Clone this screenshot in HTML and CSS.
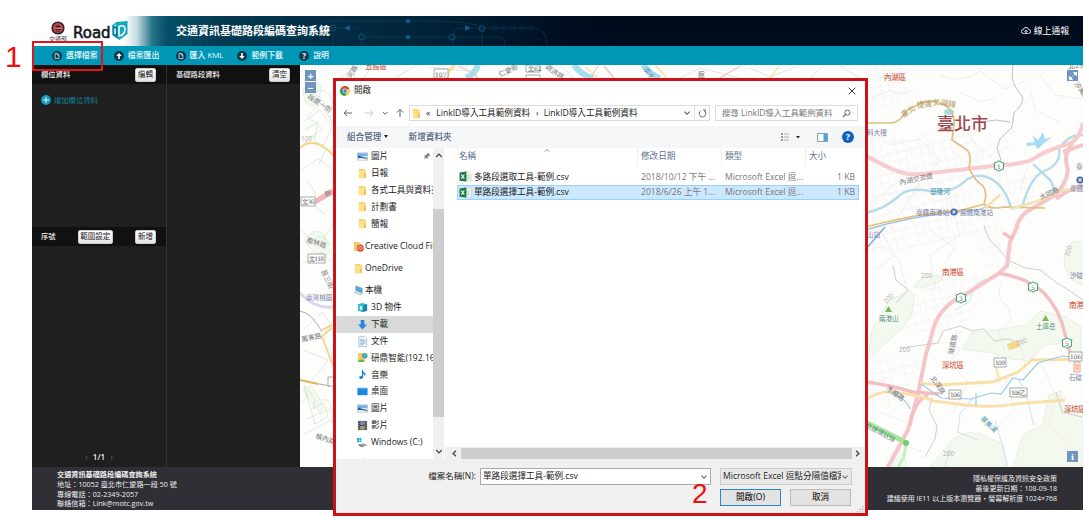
FILE: index.html
```html
<!DOCTYPE html>
<html lang="zh-TW">
<head>
<meta charset="utf-8">
<title>交通資訊基礎路段編碼查詢系統</title>
<link rel="stylesheet" href="styles.css">
</head>
<body>
<svg class="defs" width="0" height="0" aria-hidden="true">
  <defs>
    <symbol id="folder" viewBox="0 0 10 12"><path d="M1 1h5l1 1h1.500v9H1z" fill="#f6cf6b"/><path d="M1 3h6v8.500H1z" fill="#ffe08c"/><path d="M7 6h1.500v5H7z" fill="#e9b94c"/></symbol>
    <symbol id="picture" viewBox="0 0 12 12"><path d="M.5 2h11v8H.5z" fill="#e8f1f8" stroke="#8fa9bd" stroke-width=".6"/><path d="M1 2.500h10v3H1z" fill="#6db2e6"/><path d="M1 5l4 1 6 1.500v2H1z" fill="#2f5f93"/><path d="M1 7.500h5l5 1.200v1H1z" fill="#dfe9ef"/></symbol>
    <symbol id="doc" viewBox="0 0 12 12"><path d="M2 .5h6l2.500 2.500v8.500H2z" fill="#f4f8fb" stroke="#94a9b8" stroke-width=".7"/><path d="M3.500 3.500h4M3.500 5h5.500M3.500 6.500h5.500M3.500 8h5.500M3.500 9.500h4" stroke="#5ba0d0" stroke-width=".7"/></symbol>
    <symbol id="excel" viewBox="0 0 14 12"><path d="M6 1h5l2 2v8H6z" fill="#fff" stroke="#b9c4bc" stroke-width=".7"/><path d="M8 4.500h3.500M8 6.500h3.500M8 8.500h3.500" stroke="#7fb895" stroke-width=".8"/><path d="M.5 1.500L8 .5v11l-7.500-1z" fill="#1c7a43"/><path d="M2.500 3.800l3.200 4.500M5.700 3.800L2.500 8.300" stroke="#fff" stroke-width="1.200"/></symbol>
    <symbol id="file" viewBox="0 0 10 10"><circle cx="5" cy="5" r="5" fill="#0c3a4c"/><path d="M3.100 2.400h2.400l1.400 1.500v3.700H3.100zM5.400 2.400v1.600h1.500" fill="none" stroke="#d7f2f7" stroke-width=".8"/></symbol>
    <symbol id="up" viewBox="0 0 10 10"><circle cx="5" cy="5" r="5" fill="#0c3a4c"/><path d="M5 2L2.300 5h1.900v3h1.600V5h1.900z" fill="#fff"/></symbol>
    <symbol id="down" viewBox="0 0 10 10"><circle cx="5" cy="5" r="5" fill="#0c3a4c"/><path d="M5 8L2.300 5h1.900V2h1.600v3h1.900z" fill="#fff"/></symbol>
    <symbol id="chev" viewBox="0 0 8 8"><path d="M1.500 2.700L4 5.300l2.500-2.600" fill="none" stroke="currentColor" stroke-width="1.100"/></symbol>
  </defs>
</svg>

<div class="app">
  <header class="header">
    <svg class="circuit" viewBox="145 16 450 30" width="450" height="30" fill="none" stroke="#0c4a6e" stroke-width=".7">
      <path d="M160 27H333M170 37h145l7-16h80q80-1 80 8M333 46V22M345 28h9q8 1 8 10v8M333 28h12M362 37h90M453 46v-9q0-9 9-9h20M482 28h50q15 0 15 18M452 37h48q5 0 5 9M482 28v18M235 30h75M200 37v9M253 18v12M290 24v13" opacity=".7"/>
      <path d="M493 26h4v4h-4zM502 26h4v4h-4zM511 26h4v4h-4zM520 26h4v4h-4zM529 26h4v4h-4z" opacity=".45"/>
      <g stroke-width="1.100"><circle cx="333" cy="28" r="2.800"/><circle cx="362" cy="37" r="2.800"/><circle cx="452" cy="37" r="2.800"/><circle cx="482" cy="28.500" r="2.800"/></g>
      <g fill="#12598a" stroke="none"><path d="M350 25v6l-6-3zM465 25v6l6-3z"/><circle cx="408" cy="21" r="2.200"/><circle cx="408" cy="37" r="2.200"/></g>
    </svg>
    <div class="emblem">
      <svg viewBox="0 0 14 14" width="14" height="14"><circle cx="7" cy="7" r="6.600" fill="#26264b"/><circle cx="7" cy="7" r="4.900" fill="#d6452e"/><path d="M3.500 6.500Q7 2 10.500 6.500zM4 8h6v1H4zM5 9.800h4v.8H5z" fill="#2a2146"/><path d="M3.200 7.200h7.600" stroke="#f3c9a7" stroke-width=".6"/></svg>
      <span>交通部</span>
    </div>
    <div class="logo"><span>Road</span>
      <svg viewBox="0 0 17 21" width="18" height="21"><path d="M1 5l4-3 11-1v13l-8 6-7-5z" fill="#16a6bf"/><path d="M1 5l5 2.500v11L1 15z" fill="#0b7f9a"/><path d="M3.500 8.500v5.500M7.500 6.500v9.500c3.500-.5 6-3 6-7 0-3-2.500-4-6-2.500z" fill="none" stroke="#fff" stroke-width="1.500"/><path d="M3 5.800l1.500-.8" stroke="#fff" stroke-width="1.300"/></svg>
    </div>
    <h1>交通資訊基礎路段編碼查詢系統</h1>
    <a class="report"><svg viewBox="0 0 12 10" width="10" height="9"><path d="M3.500 8.500H3a2.300 2.300 0 0 1-.3-4.600 3.400 3.400 0 0 1 6.600 0A2.300 2.300 0 0 1 9 8.500h-.5M6 9V5M4.300 6.500L6 4.700l1.700 1.800M4 8.500h4" fill="none" stroke="#fff" stroke-width="1.100"/></svg>線上通報</a>
  </header>

  <nav class="nav">
    <a><svg><use href="#file"/></svg>選擇檔案</a>
    <a><svg><use href="#up"/></svg>檔案匯出</a>
    <a class="kml"><svg><use href="#file"/></svg>匯入 KML</a>
    <a><svg><use href="#down"/></svg>範例下載</a>
    <a><i class="q">?</i>說明</a>
  </nav>

  <main class="main">
    <section class="col">
      <div class="bar"><b>欄位資料</b><button>編輯</button></div>
      <div class="upper"><a class="add"><svg viewBox="0 0 10 10" width="10" height="10"><circle cx="5" cy="5" r="5" fill="#0e9cb9"/><path d="M5 1.800v6.400M1.800 5h6.400" stroke="#e4f8fb" stroke-width="1"/></svg>增加欄位資料</a></div>
      <div class="bar"><b>序號</b><button class="range">範圍設定</button><button>新增</button></div>
      <div class="lower"><span class="pager"><i>‹</i> 1/1 <i>›</i></span></div>
    </section>
    <section class="col second">
      <div class="bar"><b>基礎路段資料</b><button>清空</button></div>
    </section>
    <section class="map">
      <svg viewBox="300 65 783 402" width="783" height="402" fill="none" class="mapart">
        <defs>
          <pattern id="blocks" width="23" height="19" patternUnits="userSpaceOnUse" patternTransform="rotate(-14)"><path d="M0 4h23M0 12h14M6 0v19M14 4v15M19 0v12" stroke="#ececee" stroke-width=".6"/></pattern>
          <g id="shield"><path d="M0-5.200L2-3.900 4.900-3 4.300 0 4.600 3.200 1.800 4 0 5.200-1.800 4-4.600 3.200-4.300 0-4.900-3-2-3.900z" fill="#fff" stroke="#3c9a68" stroke-width="1"/></g>
          <g id="station"><circle r="3.600" fill="#4b6bb0"/><path d="M-2 0h4M0-2v4M-1.500-1.500l3 3M1.500-1.500l-3 3" stroke="#fff" stroke-width=".6"/></g>
        </defs>
        <path d="M300 65h783v402H300z" fill="#fdfdfc"/>
        <path d="M865 130l50 10 35-25 50 50-25 30 20 35-60 15-70 10zM865 65h40l10 30-50 20zM990 170l60 5-30 40-30-20zM900 330l30-60 60 5-30 60zM970 225h40l-20 50zM865 350l60 10-20 45-40 5z" fill="url(#blocks)"/>
        <g fill="#f4f9f0" stroke="#deebd9" stroke-width=".7">
          <path d="M913 286q10-12 28-10l2 3q-12 9-28 9z"/>
          <path d="M868 360l4-30 10-18 8-12 20-10 5 5-4 22-10 12-14 13z"/>
          <path d="M1064 262q2-20 12-21l8 2v42q-18-3-20-23z"/>
          <path d="M1025 325l16-14 25 6 15 10v30l-15-14-22 2-14 16-18-2-20-6-30-4 10-16 30-4z"/>
          <path d="M945 448q14-20 35-14l23 10 3 23H930zM1013 467l10-32 20-10 6-30 12-4 2 20 20-6v62zM885 467l15-18 8 18z"/>
          <path d="M303 90q10-14 19-4l-4 18q-14 8-15-14zM304 240q10-14 20-6l6 18-10 8zM303 390l8-5q15 20 10 30z"/>
        </g>
        <g stroke="#ebe7e4" stroke-width=".7">
          <path d="M880 78l12-8M866 100l23-9 18 3M890 145l30-6 20 22-15 15M940 75q20 10 40-4l25 18 20-8M960 92l20 10 15-4M985 120l-15 18 20 18 20-10M1040 75l15 20 26 4M1030 90l5 20 25 12M1030 160l-10 30M900 180l-30 24M925 175l-35 55M950 200l10 35-30 20 6 35M865 250l20-4 14 14 8 30M880 230l15 25-20 15M930 230l25 18-10 15M1002 280q-8 20 6 27l3 14-12 10 6 20M925 350q20-15 35 0l-10 12 18 20-15 30M880 412l30 12-8 20 20 8M995 430l20-20-10-30 20-14-6-28M1040 360l16 36-8 30 20 15"/>
        </g>
        <g stroke="#e3deda" stroke-width=".7" id="contours">
          <path d="M303 92l16 13-12 11 15 13-18 14M309 98q16-18 24 5M302 123l18-13 12 16-8 19-22-3M300 171l18-12 14 10M300 230l20 15 12-20M301 265l20-13 12 11M303 330l19-18 10 14M303 350l25 10-16 20M302 388q10 8 0 14M306 419l25-10M303 435l28-15M320 400q14-4 12 22"/>
        </g>
        <g stroke="#c8e7c4" stroke-width=".8"><path d="M305 130l13-8-4 18 12 9-7 15M307 180l9 14-4 9 13 12M316 95q11 6 7 12l9 15M307 246q15-19 23 0M304 385l11 14-2 10 10-6 5 13-13 8z"/></g>
        <path d="M300 148q14-13 33 7M322 330l10-5M333 365q-10-25-11-29l10-8" stroke="#f6d68d" stroke-width="2"/>
        <path d="M313 203l20-12" stroke="#f4b3b7" stroke-width="5"/>
        <path d="M300 311q12 2 22 21M300 380q18 4 30 6" stroke="#a8a2a3" stroke-width=".9"/><path d="M300 380l18 4" stroke="#e7b453" stroke-width="2"/>
        <path d="M300 293q14 16 33 14" stroke="#dad7ee" stroke-width="3"/>
        <g><path d="M340 78l18-12M372 65l-8 13M395 78l20-12M430 67l40 4M560 65l14 13M680 78l20-10 40 10M750 68l20 9 30-12M810 78l14-13M840 66l20 12" stroke="#dfdbdc" stroke-width=".8"/>
          <path d="M455 65q-9 7-8 13" stroke="#f9dfa8" stroke-width="4"/><path d="M478 78q-5-6-20-12M590 78l8-12M604 66l10 12M720 78l20-12" stroke="#f6bdb8" stroke-width="1.200"/>
          <path d="M466 78q9-4 12-13M574 65q7 10 19 13M643 65q8 10 17 13" stroke="#a9dcec" stroke-width="6"/><path d="M585 67l12 10M655 65l12 13M770 78l9-12" stroke="#fbe6b3" stroke-width="2"/></g>
        <g stroke="#c3e2f1" stroke-width=".9"><path d="M955 310l14-8 6-17 10-6M978 440l-20-8 2-18 14-17M995 420l10 35 3 12M1019 380l8 18 7 28M945 467l5-20"/></g>
        <path d="M865 213q20-4 34-17 9-9 31-5 25 2 36-11 16-10 31 3 10 9 14 25M1022 207q8-28 20-35 20-7 17-24 10-14 24-13M1033 164l18 17 6 17" stroke="#b5dcea" stroke-width="2.400"/>
        <path d="M1026 143l9-1-3-7 6 5 5-8 2 7 7-2-9 7-5 5-3-4-8 1z" fill="#a6dcef"/><ellipse cx="949" cy="112" rx="5" ry="3" fill="#9bdfe9"/>
        <path d="M865 230q45-14 100-19 15 0 20-4" stroke="#9cc3ea" stroke-width="1.500"/><path d="M865 227q50-13 97-17l23-6" stroke="#ecbf68" stroke-width="1.500"/>
        <path d="M865 250q14-16 20-23" stroke="#7eb2e6" stroke-width="1.600"/>
        <path d="M1013 65q-2 15 2 21l8 12q-1 8-9 15l-2 14-12 12-3 9 4 12-8 7M980 122l16-2 14 2" stroke="#cdb2b5" stroke-width=".9"/>
        <path d="M984 225q3 15 12 21l12 14 17 8 15 2 17 13 13 8 13 9M893 265l3 15 12 10-12 13M900 348l38-5 5-12 17-5 12 5 12-2 10 12 14-2 10 4M932 397l-3 13 8 16-2 13-10 18M1056 392l6 20 20 5" stroke="#c9bfbe" stroke-width=".8"/>
        <path d="M865 155q27 16 43 19 12 1 23-1l71-8q26-1 36-9 10-6 33-13 9-5 12-20" stroke="#f8cccf" stroke-width="4"/>
        <path d="M1072 143l-4 7q-4 8 0 20-2 15-13 25l-27 16q-7 4-12 16M1083 185q-16 5-27 14M1083 145l-20 7M1018 225l-8 17-3 24-9 8-32 20q-29 13-34 40l-6 20-8 40-10 36-20 37" stroke="#f6c5c9" stroke-width="4"/>
        <path d="M998 273q30 5 46 20 16 17 21 41l6 22M865 382q20 2 48 10l26 2M928 395q-14 6-18 30M1003 233l10 6" stroke="#f3bfc3" stroke-width="3.400"/>
        <path d="M865 123h26q10-1 15-12l15-8q12-4 24 2 10 6 9 19l-2 16 15 10q5 5 2 18 5 12 14 18 5 7 1 18 7 6 20 3l41 1" stroke="#e3be82" stroke-width="1.700"/>
        <path d="M1010 209l28-8 22-10 20-4M1000 195l-15 13" stroke="#f2e1b2" stroke-width="2.600"/>
        <path d="M865 400q18-12 35-7 20 2 33 8l32 4q30 3 50-1l50-4M920 383q15 3 35 1l38-2 25-10 14-12 50-1" stroke="#fadfa8" stroke-width="2.800"/>
        <path d="M1000 382l-4-14 6-8" stroke="#fae3b4" stroke-width="2.400"/><path d="M1008 345l9-4 2 5-9 3z" fill="#f8d78f" stroke="#f8d78f" stroke-width="2"/>
        <path d="M921 384l20 14 30 1 20-6 10 1 12-16 10 2 15-17 24-7 20 2M886 392q20 5 24 17M976 393v13" stroke="#9bcbe6" stroke-width="1.200"/>
        <path d="M865 422l40 20" stroke="#a5e39b" stroke-width="5"/><path d="M906 443l-2 14-6 10" stroke="#c9eec4" stroke-width="3"/>
        <circle cx="906" cy="443" r="3" fill="#71cc69"/>
        <g fill="#7eb856"><path d="M885 312l3.500-6 3.500 6zM1042 321l3.500-6 3.500 6z"/></g>
        <g transform="translate(1077 367)"><path d="M-3-5h6V5h-6z" fill="#fff1ec" stroke="#eb9374" stroke-width=".8"/><path d="M-1-3v6M1-3v6" stroke="#eb9374"/></g>
        <use href="#shield" x="999" y="166"/><use href="#shield" x="961" y="298"/><use href="#shield" x="1033" y="287"/><use href="#shield" x="1067" y="343"/>
        <use href="#station" x="954" y="212"/><use href="#station" x="1080" y="180"/>
        <g fill="#fff" stroke="#8f9790" stroke-width=".8"><path d="M434 69h14v9h-14zM526 65h14v7h-14zM526 75h14v4h-14zM301 197h14v9h-14zM308 254h17v9h-17zM994 358h12v9h-12zM949 390h12v9h-12zM1010 388h17v9h-17zM1069 352h13v9h-13zM328 377h6v9h-6z"/></g>
        <g class="num"><text x="435" y="76.500">107</text><text x="528" y="71">北62</text><text x="302" y="204" textLength="12">北76</text><text x="309" y="261" textLength="15">北118</text><text x="995" y="365" textLength="10">109</text><text x="950" y="397" textLength="10">106</text><text x="1011" y="395" textLength="15">106乙</text><text x="1070" y="359" textLength="11">106</text><text x="997" y="169">1</text><text x="959" y="301">3</text><text x="1031" y="290">5</text><text x="1065" y="346">5</text></g>
        <g class="red"><text x="884" y="80" textLength="22">內湖區</text><text x="942" y="275" textLength="22">南港區</text><text x="942" y="368" textLength="22">深坑區</text><text x="1069" y="308" textLength="22">南港區</text><text x="1064" y="412" textLength="22">深坑區</text><text x="365" y="69" textLength="22">五股區</text></g>
        <text class="city" x="937" y="130" textLength="51">臺北市</text>
        <g class="road"><text transform="translate(900 185) rotate(-12)">內湖交流道</text><text transform="translate(1041 200) rotate(-25)">大同路</text><text transform="translate(307 98) rotate(33)">段原一街</text><text transform="translate(306 242) rotate(18)">南林路</text><text transform="translate(321 271) rotate(65)">莒三街</text><text transform="translate(302 342) rotate(-12)">萬客路</text><text transform="translate(315 438) rotate(18)">橫內路</text><text transform="translate(886 389) rotate(38)">木柵路</text><text transform="translate(930 378) rotate(55)">北深路</text><text transform="translate(953 355) rotate(-78)">隧道路</text><text transform="translate(351 79) rotate(-60)">河路</text><text transform="translate(500 77) rotate(-25)">仁愛街</text><text transform="translate(545 68) rotate(35)">疏洪路</text><text transform="translate(1074 84) rotate(55)">汐萬路</text><text x="698" y="77">館</text><text transform="translate(326 197) rotate(-25)">新</text></g>
        <g class="metro"><text transform="translate(903 118) rotate(-33)">臺北</text><text transform="translate(917 108) rotate(-8)">捷運文</text><text transform="translate(940 105) rotate(10)">湖線</text></g>
        <g class="water"><text x="930" y="194" textLength="20">基隆河</text><text transform="translate(980 419) rotate(45)">景美溪</text><text transform="translate(643 69) rotate(55)">淡水河</text></g>
        <g class="place"><text x="916" y="215" textLength="33">臺鐵南港站</text><text x="960" y="215" textLength="33">高鐵南港站</text><text x="867" y="135">科大樓</text><text x="867" y="237">山站</text><text x="1070" y="191">臺鐵</text><text x="1076" y="169">臺</text><text x="1070" y="278">汐碇</text><text x="1069" y="380">石碇</text><text x="306" y="300">臺灣桃園</text></g>
        <g class="peak"><text x="879" y="321">南港山</text><text x="1036" y="329">土庫岳</text><text transform="translate(865 427) rotate(28)">北捷環狀線</text></g>
        <g class="elev"><text x="921" y="278">200</text><text transform="translate(886 304) rotate(-45)">200</text><text x="943" y="456">200</text><text x="899" y="352">200</text><text transform="translate(1069 257) rotate(-75)">200</text><text x="301" y="141">100</text><text transform="translate(1017 346) rotate(-20)">200</text></g>
        <text class="cut" x="1068" y="68">北29</text>
      </svg>
      <div class="zoomers"><button>+</button><button>−</button></div>
      <button class="full"><svg viewBox="0 0 10 10" width="10" height="10"><path d="M5.500 1.500h3v3zM1.500 5.500v3h3zM7.500 2.500l-2 2M2.500 7.500l2-2" fill="#fff" stroke="#fff"/></svg></button>
      <button class="info">i</button>
    </section>
  </main>

  <footer class="footer">
    <div><b>交通資訊基礎路段編碼查詢系統</b><span>地址：10052 臺北市仁愛路一段 50 號</span><span>專線電話：02-2349-2057</span><span>聯絡信箱：Link@motc.gov.tw</span></div>
    <div class="right"><span>隱私權保護及資訊安全政策</span><span>最後更新日期：108-09-18</span><span>建議使用 IE11 以上版本瀏覽器・螢幕解析度 1024×768</span></div>
  </footer>
</div>

<div class="dialog">
  <div class="title">
    <svg viewBox="0 0 10 10" width="10" height="10"><circle cx="5" cy="5" r="5" fill="#ffcd40"/><path d="M5 5L.7 2.500A5 5 0 0 1 9.300 2.500z" fill="#e04335"/><path d="M5 5L.7 2.500A5 5 0 0 0 5 10l2-4z" fill="#1fa15d"/><circle cx="5" cy="5" r="2.400" fill="#fff"/><circle cx="5" cy="5" r="1.900" fill="#4688f1"/></svg>
    <span>開啟</span>
    <svg class="close" viewBox="0 0 8 8" width="8" height="8"><path d="M.7.7l6.600 6.600M7.300.7L.7 7.300" stroke="#222" stroke-width=".9"/></svg>
  </div>
  <div class="address">
    <svg class="arrows" viewBox="0 0 66 12" width="66" height="12" fill="none" stroke="#666" stroke-width="1"><path d="M10 6H2M5 3L2 6l3 3"/><path d="M23 6h8M28 3l3 3-3 3" stroke="#ccc"/><path d="M41 5l2.200 2.300L45.400 5"/><path d="M58 10V2.500M55 5.500l3-3 3 3"/></svg>
    <div class="path"><svg class="fi"><use href="#folder"/></svg><i>«</i><span>LinkID導入工具範例資料</span><i class="gt">›</i><span>LinkID導入工具範例資料</span><svg class="cv"><use href="#chev"/></svg><em><svg viewBox="0 0 10 10" width="9" height="9"><path d="M3 2A3.700 3.700 0 1 0 7 2M5.500 1H8v2.600" fill="none" stroke="#555" stroke-width="1"/></svg></em></div>
    <div class="search"><span>搜尋 LinkID導入工具範例資料</span><svg viewBox="0 0 10 10" width="9" height="9"><circle cx="6" cy="4" r="2.800" fill="none" stroke="#555"/><path d="M4 6L1 9" stroke="#555" stroke-width="1.200"/></svg></div>
  </div>
  <div class="tools"><span>組合管理 <i></i></span><span>新增資料夾</span>
    <div class="views">
      <svg viewBox="0 0 20 10" width="24" height="10"><path d="M0 1h2v2H0zM0 4h2v2H0zM0 7h2v2H0z" fill="#999"/><path d="M3 2h5M3 5h5M3 8h5" stroke="#aaa"/><path d="M15 4h4l-2 2.500z" fill="#222"/></svg>
      <svg viewBox="0 0 11 9" width="11" height="9"><path d="M.5.5h10v8H.5z" fill="#fff" stroke="#8ba0b0"/><path d="M6.500 1h3.700v7H6.500z" fill="#4aa5df"/></svg>
      <b>?</b>
    </div>
  </div>
  <div class="panes">
    <div class="tree">
      <div class="item"><svg><use href="#picture"/></svg>圖片<svg class="pin" viewBox="0 0 8 8"><path d="M4.500 1l2.500 2.500M5 1.500L3 3.500l-1.500.5 2.500 2.500.5-1.500 2-2zM2.700 5.300L1 7" fill="#888" stroke="#777" stroke-width=".8"/></svg></div>
      <div class="item"><svg><use href="#folder"/></svg>日報</div>
      <div class="item"><svg><use href="#folder"/></svg>各式工具與資料夾</div>
      <div class="item"><svg><use href="#folder"/></svg>計劃書</div>
      <div class="item"><svg><use href="#folder"/></svg>簡報</div>
      <div class="item root"><svg viewBox="0 0 12 12"><path d="M1 1h6l1 2h2v8H1z" fill="#f4c866"/><circle cx="8" cy="8" r="3.800" fill="#dc4a38"/><path d="M6 9a1.500 1.500 0 0 1 1-2.500 1.800 1.800 0 0 1 3 1.500Q9 10 7 9" fill="none" stroke="#fff" stroke-width=".8"/></svg>Creative Cloud Files</div>
      <div class="item root"><svg><use href="#folder"/></svg>OneDrive</div>
      <div class="item root"><svg viewBox="0 0 12 12"><path d="M3 1l7 2.500v5L3 6z" fill="#4da9e4" stroke="#6e8ba3" stroke-width=".6"/><path d="M1 8l3-1 7 2.500-3 1.500z" fill="#dce5eb" stroke="#a3b2bd" stroke-width=".6"/></svg>本機</div>
      <div class="item"><svg viewBox="0 0 12 12"><path d="M1 2.500L6 1l5 1.500v7L6 11 1 9.500z" fill="#35b9d8"/><path d="M6 4l5-1.500v7L6 11z" fill="#1689a8"/><path d="M3 4.500h3v4H3z" fill="#d9f7fb"/></svg>3D 物件</div>
      <div class="item selected"><svg viewBox="0 0 12 12"><path d="M4 1h4v5h3l-5 5.500L1 6h3z" fill="#2b86dc"/></svg>下載</div>
      <div class="item"><svg><use href="#doc"/></svg>文件</div>
      <div class="item"><svg viewBox="0 0 12 12"><path d="M1 1h5l1 1h2v8H1z" fill="#f5cd68"/><circle cx="8.500" cy="4" r="3" fill="#3c9cd2"/><path d="M7 3q2-2 3 0l-2 3z" fill="#6fc06d"/><path d="M1 10h7M5 8v3" stroke="#3ba64b" stroke-width="1.300"/></svg>研鼎智能(192.168</div>
      <div class="item"><svg viewBox="0 0 12 12"><path d="M6 1v8" stroke="#1584d6" stroke-width="1.300"/><path d="M6 1q0 2 3 3.500 1 1.500-1 3 .5-2-2-2.500z" fill="#1584d6"/><ellipse cx="4.500" cy="9.300" rx="2" ry="1.600" fill="#1584d6"/></svg>音樂</div>
      <div class="item"><svg viewBox="0 0 12 12"><path d="M.5 2h11v8H.5z" fill="#1688e0"/><path d="M1 2.500h10v1H1z" fill="#54b4f3"/></svg>桌面</div>
      <div class="item"><svg><use href="#picture"/></svg>圖片</div>
      <div class="item"><svg viewBox="0 0 12 12"><path d="M1 1h10v10H1z" fill="#45464d"/><path d="M3.500 1.500h5v4h-5z" fill="#708fba"/><path d="M3.500 6.500h5v4h-5z" fill="#a4a06e"/><path d="M2 1.500v10M10 1.500v10" stroke="#ddd" stroke-width=".8" stroke-dasharray="1 1"/></svg>影片</div>
      <div class="item"><svg viewBox="0 0 12 12"><path d="M0 1h2.200v2.200H0zM2.600 1h2.200v2.200H2.600zM0 3.600h2.200v2.200H0zM2.600 3.600h2.200v2.200H2.600z" fill="#19b3d7"/><path d="M2 8l6-1 3.500 2-5 2z" fill="#9aa5ae"/><path d="M2 8l4.500 2v1.200L2 9.500z" fill="#5d666e"/></svg>Windows (C:)</div>
      <div class="item"><svg viewBox="0 0 12 12"><path d="M2 8l5-2 4 2-5 2z" fill="#8c979f"/></svg></div>
    </div>
    <div class="vscroll"><svg class="flip"><use href="#chev"/></svg><i></i><svg><use href="#chev"/></svg></div>
    <div class="list">
      <div class="row head"><span>名稱<svg class="flip"><use href="#chev"/></svg></span><span>修改日期</span><span>類型</span><span>大小</span></div>
      <div class="row"><span><svg><use href="#excel"/></svg>多路段選取工具-範例.csv</span><span>2018/10/12 下午 ...</span><span>Microsoft Excel 逗...</span><span>1 KB</span></div>
      <div class="row picked"><span><svg><use href="#excel"/></svg>單路段選擇工具-範例.csv</span><span>2018/6/26 上午 1...</span><span>Microsoft Excel 逗...</span><span>1 KB</span></div>
      <div class="hscroll"><svg class="l"><use href="#chev"/></svg><i></i><svg class="r"><use href="#chev"/></svg></div>
    </div>
  </div>
  <div class="bottom">
    <label>檔案名稱(N):</label>
    <div class="field name"><span>單路段選擇工具-範例.csv</span><svg><use href="#chev"/></svg></div>
    <div class="field type"><span>Microsoft Excel 逗點分隔值檔案</span><svg><use href="#chev"/></svg></div>
    <button class="ok">開啟(O)</button><button class="cancel">取消</button>
    <svg class="grip" viewBox="0 0 9 9" width="8" height="8"><path d="M7 1h1.500v1.500H7zM7 4h1.500v1.500H7zM7 7h1.500v1.500H7zM4 4h1.500v1.500H4zM4 7h1.500v1.500H4zM1 7h1.500v1.500H1z" fill="#b5b5b5"/></svg>
  </div>
</div>

<div class="frame"></div>
<span class="step one">1</span>
<span class="step two">2</span>
</body>
</html>
```
FILE: styles.css
```css
* { box-sizing: border-box; }
body { margin: 0; width: 1089px; height: 520px; overflow: hidden; position: relative; background: #fff; font-family: "Open Sans", "Noto Sans CJK TC", sans-serif; font-size: 8px; line-height: 1.2; }
.defs { position: absolute; }
i, em { font-style: normal; }
svg { flex: none; display: block; }
button { font: inherit; padding: 0; margin: 0; }

.app { margin: 16px 0 0 32px; width: 1051px; height: 494px; display: flex; flex-direction: column; position: absolute; top: 0; left: 0; }

.header { height: 30px; flex: none; position: relative; display: flex; align-items: center; color: #fff; background: linear-gradient(90deg, #fff 0, #fff 92px, #c4dbe1 105px, #287489 120px, #06506a 134px, #033b51 185px, #022c42 300px, #022439 390px, #010e21 530px, #000b1b 600px); }
.circuit { position: absolute; left: 113px; top: 0; }
.emblem { width: 41px; padding-left: 11px; height: 30px; display: flex; flex-direction: column; align-items: center; color: #444; font-size: 6px; line-height: 6px; padding-top: 5px; }
.emblem span { margin-top: 1px; white-space: nowrap; }
.logo { width: 103px; display: flex; align-items: center; color: #17181a; font: 15px "DejaVu Sans", sans-serif; letter-spacing: 0; -webkit-text-stroke: .6px #17181a; }
.logo span { padding-top: 4px; }
.logo svg { margin: -1px 0 0 0; }
h1 { margin: 0; font-size: 11px; line-height: 16px; position: relative; font-weight: 700; white-space: nowrap; }
.report { margin-left: auto; margin-right: 14px; display: flex; align-items: center; gap: 3px; font-size: 8.800px; }

.nav { height: 19px; flex: none; background: #0097b6; display: flex; align-items: center; color: #e9fbfd; font-size: 7.900px; padding-left: 20px; }
.nav a { width: 61.800px; display: flex; align-items: center; gap: 4px; white-space: nowrap; font-weight: 500; }
.nav svg { width: 10px; height: 10px; }
.q { width: 10px; height: 10px; border-radius: 50%; background: #0c3a4c; color: #fff; font-weight: bold; text-align: center; line-height: 10px; font-size: 8px; }

.main { height: 402px; flex: none; display: grid; grid-template-columns: 134px 134px 783px; background: #1f1f1f; color: #eee; }
.col { display: flex; flex-direction: column; font-size: 7.300px; }
.second { border-left: 1px solid #303030; }
.bar { height: 19px; flex: none; background: #111; display: flex; align-items: center; justify-content: space-between; padding: 0 10px 0 9px; }
.bar b { font-weight: 500; }
.bar button { height: 14px; width: 21px; border: 1px solid #ccc; border-radius: 2px; background: linear-gradient(#fff, #e5e5e5); color: #222; font-size: 7.500px; line-height: 11px; white-space: nowrap; }
.bar .range { width: 35px; }
.upper { height: 143px; padding: 11px 9px; }
.add { color: #157f96; display: flex; gap: 3px; align-items: center; }
.lower { flex: 1; display: flex; align-items: flex-end; justify-content: center; padding-bottom: 5px; }
.pager { font-weight: 600; font-size: 8px; }
.pager i { color: #555; padding: 0 3px; }

.map { position: relative; overflow: hidden; }
.mapart text { font-size: 7px; }
.mapart .num text { font: 6px "DejaVu Serif", "Noto Sans CJK TC", serif; fill: #555; }
.mapart .red text { fill: #d2664f; font-size: 7.500px; font-weight: 500; }
.mapart .city { fill: #9b494c; font-size: 17px; font-weight: 500; }
.mapart .road text { fill: #77777a; font-size: 6.800px; }
.mapart .metro text { fill: #b29963; font-size: 7.800px; }
.mapart .water text { fill: #4a91ab; font-size: 6.800px; }
.mapart .place text { fill: #7680a5; font-size: 6.600px; }
.mapart .peak text { fill: #55917d; font-size: 6.500px; }
.mapart .elev text { fill: #b0b0a8; font-size: 6.500px; }
.mapart .cut { fill: #777; }
.map button { border: 0; background: #7295bf; color: #fff; width: 11px; height: 11px; font-weight: bold; font-size: 10px; line-height: 10px; display: flex; align-items: center; justify-content: center; }
.zoomers { position: absolute; left: 5px; top: 5px; display: grid; gap: 1px; }
.map .full, .map .info { position: absolute; right: 5px; top: 5px; }
.map .info { top: auto; bottom: 5px; font-family: "DejaVu Serif", serif; font-size: 8px; }

.footer { height: 43px; flex: none; background: #302f36; color: #eee; display: flex; justify-content: space-between; padding: 3px 26px 0 25px; font-size: 7.150px; line-height: 9.800px; white-space: nowrap; }
.footer div { display: flex; flex-direction: column; }
.footer .right { align-items: flex-end; padding-top: 4px; font-size: 7px; }

.dialog { position: absolute; left: 333px; top: 78px; width: 535px; height: 438px; border: 3px solid #cc1219; background: #fff; font-size: 8.600px; color: #222; white-space: nowrap; }
.title { height: 19px; display: flex; align-items: center; padding: 0 9px 0 4px; gap: 4px; }
.title .close { margin-left: auto; }
.address { height: 26px; display: flex; align-items: center; padding: 0 7px 0 5px; }
.arrows { width: 68px; }
.path { width: 301px; height: 16px; border: 1px solid #ddd; display: flex; align-items: center; padding-left: 2px; }
.path .fi { width: 9px; height: 11px; }
.path i { padding: 0 6px 0 5px; }
.path .gt { padding: 0 5px 0 6px; }
.path .cv { width: 8px; height: 8px; margin-left: auto; color: #555; }
.path em { margin-left: 3px; border-left: 1px solid #e2e2e2; height: 14px; width: 15px; display: flex; align-items: center; justify-content: center; }
.search { width: 143px; height: 16px; margin-left: 5px; border: 1px solid #ddd; color: #777; display: flex; align-items: center; justify-content: space-between; padding: 0 6px; font-size: 8.400px; }
.tools { height: 22px; background: #f5f6f7; display: flex; align-items: center; padding: 0 11px; color: #27415f; gap: 21px; }
.tools span i { display: inline-block; border: 2.500px solid transparent; border-top: 3px solid #222; border-bottom: 0; vertical-align: 2px; }
.views { margin-left: auto; display: flex; align-items: center; gap: 14px; }
.views b { width: 12px; height: 12px; border-radius: 50%; background: #0b63bd; color: #fff; text-align: center; font-size: 9px; line-height: 12px; }

.panes { height: 311px; display: grid; grid-template-columns: 97px 11px 421px; }
.tree { overflow: hidden; height: 311px; }
.item { height: 16.850px; display: flex; align-items: center; gap: 3px; padding-left: 21px; }
.item svg { width: 11px; height: 11px; }
.item .pin { margin-left: 32px; width: 8px; height: 8px; }
.item.root { padding-left: 17px; gap: 1px; margin-top: 5.400px; }
.selected { background: #d9d9d9; }
.vscroll { background: #f0f0f0; display: flex; flex-direction: column; align-items: center; padding: 3px 0; }
.vscroll svg { width: 10px; height: 9px; color: #444; }
.vscroll i { width: 11px; height: 208px; background: #cdcdcd; margin: 49px 0 auto; }
.flip { transform: rotate(180deg); }
.list { display: flex; flex-direction: column; padding-top: 0; }
.row { display: grid; grid-template-columns: 180px 84px 84px 52px; height: 15.500px; margin-left: 13px; width: 402px; align-items: center; color: #777; }
.row span { padding-left: 4px; }
.row span:first-child { display: flex; align-items: center; gap: 2px; padding-left: 2px; color: #222; }
.row svg { width: 13px; height: 11px; }
.row span:last-child { text-align: right; padding-right: 2px; }
.head { height: 17px; margin-bottom: 4px; color: #5a6f8a; }
.head span { line-height: 17px; border-left: 1px solid #eee; padding-left: 3px; }
.row.head span:first-child { border: 0; color: #5a6f8a; padding-left: 2px; }
.row.head span:last-child { text-align: left; }
.head svg { width: 8px; height: 7px; margin: -13px 0 0 65px; color: #888; }
.picked { background: #cce8ff; outline: 1px solid #99d1ff; outline-offset: -1px; }
.hscroll { margin-top: auto; height: 12px; background: #f0f0f0; display: flex; align-items: center; justify-content: space-between; padding: 0 3px 0 5px; margin-left: 1px; }
.hscroll svg { width: 9px; height: 9px; color: #444; }
.hscroll i { width: 391px; height: 11px; background: #cdcdcd; }
.l { transform: rotate(90deg); }
.r { transform: rotate(-90deg); }

.bottom { position: relative; height: 54px; background: #f0f0f0; display: grid; grid-template-columns: 140px 231px 61px 61px; grid-template-rows: 17px 17px; row-gap: 4px; padding-top: 9px; }
.bottom label { justify-self: end; align-self: center; font-size: 8.500px; }
.field { background: #fff; border: 1px solid #aaa; display: flex; align-items: center; justify-content: space-between; padding: 0 2px; overflow: hidden; }
.field svg { width: 8px; height: 8px; color: #666; }
.name { margin-left: 4px; width: 231px; }
.type { grid-column: 3 / 5; margin-left: 13px; width: 132px; background: #e8e8e8; border-color: #ccc; }
.type span { overflow: hidden; width: 118px; }
.bottom button { background: #e3e3e3; border: 1px solid #bbb; height: 17px; width: 61px; }
.bottom .ok { grid-column: 3; margin-left: 13px; border: 1.500px solid #2a84cf; }
.bottom .cancel { grid-column: 4; margin-left: 22px; }
.grip { position: absolute; right: 1px; bottom: 0; }

.frame { position: absolute; left: 32px; top: 41px; width: 71px; height: 30px; border: 2px solid #e2141b; }
.step { position: absolute; color: #f20d0d; font-family: "Liberation Sans", Arial, sans-serif; line-height: 1; }
.one { left: 5px; top: 42px; font-size: 30px; }
.two { left: 692px; top: 480px; font-size: 28px; }
```
